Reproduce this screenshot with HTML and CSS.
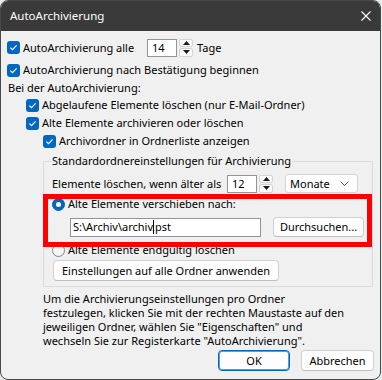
FILE: index.html
```html
<!DOCTYPE html>
<html lang="de">
<head>
<meta charset="utf-8">
<title>AutoArchivierung</title>
<link rel="stylesheet" href="styles.css">
</head>
<body>
<div class="window">
  <div class="titlebar">
    <span class="title">AutoArchivierung</span>
    <svg class="close" width="10" height="10" viewBox="0 0 10 10"><path d="M0.5 0.5 L9.5 9.5 M9.5 0.5 L0.5 9.5" stroke="#ffffff" stroke-width="1.1" fill="none"/></svg>
  </div>
  <div class="content">
    <div class="row r1">
      <div class="lbl1"><span class="cb"><svg width="13" height="13" viewBox="0 0 13 13"><path d="M3.4 6.6 L5.5 8.6 L9.6 4.4" stroke="#fff" stroke-width="1.2" fill="none"/></svg></span><span>AutoArchivierung alle</span></div>
      <div class="spin"><span class="edit num">14</span><span class="updown"><span class="ud"><svg width="7" height="4" viewBox="0 0 7 4"><path d="M0 4 L3.5 0 L7 4Z" fill="#1a1a1a"/></svg></span><span class="ud"><svg width="7" height="4" viewBox="0 0 7 4"><path d="M0 0 L3.5 4 L7 0Z" fill="#1a1a1a"/></svg></span></span></div>
      <span class="tage">Tage</span>
    </div>
    <div class="row r2"><span class="cb"><svg width="13" height="13" viewBox="0 0 13 13"><path d="M3.4 6.6 L5.5 8.6 L9.6 4.4" stroke="#fff" stroke-width="1.2" fill="none"/></svg></span><span>AutoArchivierung nach Bestätigung beginnen</span></div>
    <div class="row r3"><span class="plain">Bei der AutoArchivierung:</span></div>
    <div class="row r4 ind1"><span class="cb"><svg width="13" height="13" viewBox="0 0 13 13"><path d="M3.4 6.6 L5.5 8.6 L9.6 4.4" stroke="#fff" stroke-width="1.2" fill="none"/></svg></span><span>Abgelaufene Elemente löschen (nur E-Mail-Ordner)</span></div>
    <div class="row r5 ind1"><span class="cb"><svg width="13" height="13" viewBox="0 0 13 13"><path d="M3.4 6.6 L5.5 8.6 L9.6 4.4" stroke="#fff" stroke-width="1.2" fill="none"/></svg></span><span>Alte Elemente archivieren oder löschen</span></div>
    <div class="row r6 ind2"><span class="cb"><svg width="13" height="13" viewBox="0 0 13 13"><path d="M3.4 6.6 L5.5 8.6 L9.6 4.4" stroke="#fff" stroke-width="1.2" fill="none"/></svg></span><span>Archivordner in Ordnerliste anzeigen</span></div>

    <fieldset class="group">
      <legend>Standardordnereinstellungen für Archivierung</legend>
      <div class="row g1">
        <span class="lbl2">Elemente löschen, wenn älter als</span>
        <div class="spin"><span class="edit num">12</span><span class="updown"><span class="ud"><svg width="7" height="4" viewBox="0 0 7 4"><path d="M0 4 L3.5 0 L7 4Z" fill="#1a1a1a"/></svg></span><span class="ud"><svg width="7" height="4" viewBox="0 0 7 4"><path d="M0 0 L3.5 4 L7 0Z" fill="#1a1a1a"/></svg></span></span></div>
        <div class="combo"><span>Monate</span><svg width="9" height="5" viewBox="0 0 9 5"><path d="M0.5 0.5 L4.5 4.5 L8.5 0.5" stroke="#555" stroke-width="1" fill="none"/></svg></div>
      </div>
      <div class="row g2"><span class="rb on"><span class="dot"></span></span><span>Alte Elemente verschieben nach:</span></div>
      <div class="row g3">
        <div class="edit path"><span>S:\Archiv\archiv</span><span class="caret"></span><span>.pst</span></div>
        <div class="btn browse">Durchsuchen...</div>
      </div>
      <div class="row g4"><span class="rb"></span><span>Alte Elemente endgültig löschen</span></div>
      <div class="btn applyall">Einstellungen auf alle Ordner anwenden</div>
      <div class="highlight"></div>
    </fieldset>

    <p class="info">Um die Archivierungseinstellungen pro Ordner<br>festzulegen, klicken Sie mit der rechten Maustaste auf den<br>jeweiligen Ordner, wählen Sie "Eigenschaften" und<br>wechseln Sie zur Registerkarte "AutoArchivierung".</p>

    <div class="actions">
      <div class="btn ok">OK</div>
      <div class="btn cancel">Abbrechen</div>
    </div>
  </div>
</div>
</body>
</html>
```

FILE: styles.css
```css
* { box-sizing: border-box; }
html, body { margin: 0; padding: 0; }
body {
  width: 382px;
  height: 380px;
  background: #e6ebf0;
  font-family: "Noto Sans", "Open Sans", sans-serif;
  font-size: 11px;
  color: #000;
  overflow: hidden;
}
.window {
  width: 381px;
  height: 380px;
  border: 1px solid #4a4a4a;
  border-radius: 8px;
  background: #f0f0f0;
  overflow: hidden;
}
.titlebar {
  height: 30px;
  background: #3a3a3a;
  display: flex;
  align-items: center;
  justify-content: space-between;
  padding: 0 9px 0 9px;
  color: #fff;
}
.title { font-size: 11.5px; line-height: 14px; }
.close { display: block; margin-top: -1px; }

.content { padding: 0 6px 0 6px; }

.row { display: flex; align-items: center; white-space: nowrap; line-height: 14px; }
.r1 { margin-top: 7px; height: 19px; }
.r2 { margin-top: 4px; height: 18px; }
.r3 { height: 17px; }
.r4, .r5, .r6 { height: 18px; }
.ind1 { padding-left: 19px; }
.ind2 { padding-left: 36px; }
.plain { padding-left: 1px; }

.cb {
  width: 13px; height: 13px;
  border-radius: 3px;
  background: #0067c0;
  margin-right: 3px;
  flex: none;
  display: block;
}
.cb svg { display: block; }

.lbl1 { width: 140px; display: flex; align-items: center; }

.spin { display: flex; align-items: center; height: 19px; }
.edit {
  background: #fff;
  border: 1px solid #8f959b;
  height: 18px;
  display: flex;
  align-items: center;
}
.num { width: 30px; padding-left: 4px; }
.updown {
  margin-left: 2px;
  width: 14px;
  height: 18px;
  display: flex;
  flex-direction: column;
  gap: 1px;
}
.ud {
  flex: 1;
  background: #fbfbfb;
  border: 1px solid #d4d4d4;
  border-radius: 2px;
  display: flex;
  align-items: center;
  justify-content: center;
}
.ud svg { display: block; }
.tage { margin-left: 4px; }

.group {
  position: relative;
  margin: 4px 0 0 36px;
  width: 330px;
  border: 1px solid #dcdcdc;
  padding: 0 0 5px 8px;
}
.group legend {
  padding: 0 1px;
  margin-left: -1px;
  line-height: 14px;
}
.g1 { margin-top: 6px; height: 19px; }
.lbl2 { width: 175px; }
.combo {
  margin-left: 12px;
  width: 73px;
  height: 19px;
  background: #fdfdfd;
  border: 1px solid #d3d3d3;
  border-radius: 3px;
  display: flex;
  align-items: center;
  justify-content: space-between;
  padding: 0 8px 0 4px;
}
.combo svg { display: block; }

.g2 { margin-top: 2px; height: 18px; }
.rb {
  width: 13px; height: 13px;
  border-radius: 50%;
  border: 1px solid #858585;
  background: #f5f5f5;
  margin-right: 3px;
  flex: none;
  display: flex;
  align-items: center;
  justify-content: center;
}
.rb.on { background: #0067c0; border-color: #0067c0; }
.rb .dot { width: 5px; height: 5px; border-radius: 50%; background: #fff; }

.g3 { margin-top: 3px; height: 22px; }
.path {
  margin-left: 18px;
  width: 191px;
  height: 19px;
  padding-left: 2px;
}
.caret {
  display: inline-block;
  width: 1px;
  height: 14px;
  background: #000;
  margin-right: -2px;
  position: relative;
  z-index: 1;
}

.btn {
  background: #fdfdfd;
  border: 1px solid #d0d0d0;
  border-bottom-color: #bdbdbd;
  border-radius: 4px;
  display: flex;
  align-items: center;
  justify-content: center;
  white-space: nowrap;
  line-height: 14px;
}
.browse { margin-left: 12px; width: 91px; height: 20px; }

.g4 { margin-top: 3px; height: 18px; }
.applyall { margin-left: 1px; margin-top: 1px; width: 226px; height: 21px; }

.highlight {
  position: absolute;
  left: -1px;
  top: 26px;
  width: 329px;
  height: 53px;
  border: 5px solid #ff0000;
  pointer-events: none;
}

.info {
  margin: 5px 0 0 36px;
  line-height: 14px;
  white-space: nowrap;
}

.actions {
  display: flex;
  justify-content: flex-end;
  gap: 11px;
  margin-top: 2px;
  padding-right: 0;
}
.ok { width: 72px; height: 21px; border: 1px solid #0067c0; box-shadow: inset 0 0 0 1px #5a9bd8; }
.cancel { width: 73px; height: 21px; }
```
